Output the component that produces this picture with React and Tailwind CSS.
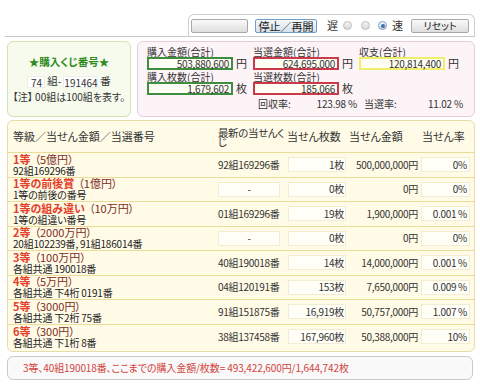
import React from "react";

const rows = [
  { rank: "1等", prize: "（5億円）", note: "92組169296番", latest: "92組169296番", count: "1枚", amount: "500,000,000円", rate: "0%" },
  { rank: "1等の前後賞", prize: "（1億円）", note: "1等の前後の番号", latest: "-", count: "0枚", amount: "0円", rate: "0%" },
  { rank: "1等の組み違い", prize: "（10万円）", note: "1等の組違い番号", latest: "01組169296番", count: "19枚", amount: "1,900,000円", rate: "0.001 %" },
  { rank: "2等", prize: "（2000万円）", note: "20組102239番, 91組186014番", latest: "-", count: "0枚", amount: "0円", rate: "0%" },
  { rank: "3等", prize: "（100万円）", note: "各組共通 190018番", latest: "40組190018番", count: "14枚", amount: "14,000,000円", rate: "0.001 %" },
  { rank: "4等", prize: "（5万円）", note: "各組共通 下4桁 0191番", latest: "04組120191番", count: "153枚", amount: "7,650,000円", rate: "0.009 %" },
  { rank: "5等", prize: "（3000円）", note: "各組共通 下2桁 75番", latest: "91組151875番", count: "16,919枚", amount: "50,757,000円", rate: "1.007 %" },
  { rank: "6等", prize: "（300円）", note: "各組共通 下1桁 8番", latest: "38組137458番", count: "167,960枚", amount: "50,388,000円", rate: "10%" },
];

const Field = ({ value, unit, tone }) => (
  <div className="flex items-center">
    <div className={`w-[86px] h-[13px] border-2 ${tone} bg-[#fffef4] text-right pr-[2px] text-[10px] leading-[9px] tracking-[-0.3px]`}>
      {value}
    </div>
    <span className="ml-[3px] text-[11px]">{unit}</span>
  </div>
);

const Radio = ({ on }) => (
  <span
    className={`w-[9px] h-[9px] rounded-full border flex items-center justify-center bg-linear-to-b from-[#f6f6f6] to-[#d8d8d8] ${
      on ? "border-[#7d9cc0]" : "border-[#bcbcbc]"
    }`}
  >
    {on && <span className="w-[4px] h-[4px] rounded-full bg-[#3570b8]" />}
  </span>
);

export default function App() {
  return (
    <div className="w-[480px] h-[385px] bg-white text-[#333] font-['Noto_Sans_CJK_JP',sans-serif] [font-feature-settings:'palt'] text-[11px] leading-none overflow-hidden">
      {/* controls */}
      <div className="h-[37px] pt-[14px] mx-[5px] border-b border-[#c8c8c8] flex justify-end">
        <div className="w-[287px] h-[22px] border border-b-0 border-[#cfcfcf] rounded-t-[6px] flex items-center">
          <button className="ml-[2px] w-[57px] h-[14px] border border-[#a8a8a8] rounded-[2px] bg-linear-to-b from-[#fafafa] to-[#dedede]" />
          <button className="ml-[7px] w-[62px] h-[14px] border border-[#6f9fc8] rounded-[2px] bg-linear-to-b from-[#f4f8fb] to-[#d6e2ec] text-[11px] leading-[12px] text-[#222]">
            停止／再開
          </button>
          <span className="ml-[10px] w-[11px]">遅</span>
          <span className="ml-[5px]"><Radio /></span>
          <span className="ml-[9px]"><Radio /></span>
          <span className="ml-[8px]"><Radio on /></span>
          <span className="ml-[5px] w-[11px]">速</span>
          <button className="ml-[8px] w-[58px] h-[14px] border border-[#a8a8a8] rounded-[2px] bg-linear-to-b from-[#fafafa] to-[#dedede] text-[10px] leading-[12px] text-[#222]">
            リセット
          </button>
        </div>
      </div>

      {/* summary panels */}
      <div className="flex items-start gap-[6px] pl-[7px] pr-[5px] mt-[4px]">
        <div className="w-[124px] h-[76px] border border-[#d4e2b4] rounded-[6px] bg-[#f6fbee] flex flex-col items-center justify-center">
          <div className="font-bold text-[10.5px] text-[#2e8b1e] leading-[12px]">★購入くじ番号★</div>
          <div className="flex items-center mt-[7px] h-[13px] text-[10.5px]">
            <span className="w-[18px] h-[12px] bg-white border border-[#eeeeee] text-right pr-[2px] text-[10px] leading-[11px]">74</span>
            <span className="ml-[2px]">組-</span>
            <span className="ml-[2px] w-[35px] h-[12px] bg-white border border-[#eeeeee] text-right pr-[2px] text-[10px] leading-[11px]">191464</span>
            <span className="ml-[2px]">番</span>
          </div>
          <div className="mt-[3px] leading-[11px] text-[10px] whitespace-nowrap">【注】 00組は100組を表す。</div>
        </div>

        <div className="flex-1 h-[76px] border border-[#e9cbd8] rounded-[6px] bg-[#fdf4f7] pl-[9px] pt-[4px] text-[10px]">
          <div className="grid grid-cols-[106px_106px_1fr] grid-rows-[11px_13px_12px_13px_15px] items-center">
            <div className="leading-[11px]">購入金額(合計)</div>
            <div className="leading-[11px]">当選金額(合計)</div>
            <div className="leading-[11px]">収支(合計)</div>
            <Field value="503,880,600" unit="円" tone="border-[#3f8d3f]" />
            <Field value="624,695,000" unit="円" tone="border-[#cc3a4a]" />
            <Field value="120,814,400" unit="円" tone="border-[#f0ef6a]" />
            <div className="leading-[11px]">購入枚数(合計)</div>
            <div className="leading-[11px]">当選枚数(合計)</div>
            <div />
            <Field value="1,679,602" unit="枚" tone="border-[#3f8d3f]" />
            <Field value="185,066" unit="枚" tone="border-[#cc3a4a]" />
            <div />
            <div />
            <div className="flex justify-between pl-[5px] pr-[2px] self-end leading-[12px]">
              <span>回収率:</span>
              <span className="tracking-[-0.2px]">123.98 %</span>
            </div>
            <div className="flex justify-between pl-[5px] pr-[11px] self-end leading-[12px]">
              <span>当選率:</span>
              <span className="tracking-[-0.2px]">11.02 %</span>
            </div>
          </div>
        </div>
      </div>

      {/* results table */}
      <div className="mt-[3px] ml-[7px] mr-[5px] border border-[#e6dcaa] rounded-[6px] bg-[#fffbe7] pb-[2px]">
        <div className="flex items-center h-[32px] border-b border-[#eadb96] pl-[5px]">
          <div className="w-[205px]">等級／当せん金額／当選番号</div>
          <div className="w-[69px] leading-[9px] text-[10.5px] tracking-[-0.4px]">最新の当せんくじ</div>
          <div className="w-[61px]">当せん枚数</div>
          <div className="w-[72px] pl-[1px]">当せん金額</div>
          <div className="w-[52px] pl-[2px]">当せん率</div>
        </div>
        {rows.map((r, i) => (
          <div
            key={r.rank}
            className={`flex items-center h-[24.5px] pl-[5px] ${i < rows.length - 1 ? "border-b border-[#eadb96]" : ""}`}
          >
            <div className="w-[205px] flex flex-col">
              <div className="leading-[11px] whitespace-nowrap">
                <span className="font-bold text-[#e4402a]">{r.rank}</span>
                <span className="ml-[4px] text-[#7b2d22]">{r.prize}</span>
              </div>
              <div className="text-[10px] leading-[11px] text-[#222] tracking-[-0.2px] whitespace-nowrap">{r.note}</div>
            </div>
            <div className="w-[69px] pr-[7px]">
              <div
                className={`h-[15px] flex items-center text-[10px] tracking-[-0.3px] ${
                  r.latest === "-" ? "justify-center bg-[#fffef7] border border-[#f2ecd2]" : ""
                }`}
              >
                {r.latest}
              </div>
            </div>
            <div className="w-[61px] pl-[1px] pr-[2px]">
              <div className="h-[15px] flex items-center justify-end pr-[1px] bg-[#fffef7] border border-[#f2ecd2] text-[10px] tracking-[-0.3px]">
                {r.count}
              </div>
            </div>
            <div className="w-[72px] text-right pr-[2px] text-[10px] tracking-[-0.3px]">{r.amount}</div>
            <div className="w-[50px] pl-[1px]">
              <div className="h-[15px] flex items-center justify-end pr-[2px] bg-[#fffef7] border border-[#f2ecd2] text-[10px] tracking-[-0.3px]">
                {r.rate}
              </div>
            </div>
          </div>
        ))}
      </div>

      {/* footer */}
      <div className="mt-[4px] ml-[7px] mr-[7px] h-[24px] border border-[#c9c9c9] rounded-[6px] bg-[#f9f9f9] flex items-center pl-[15px] text-[10px] text-[#d2433c] tracking-[-0.1px]">
        3等、40組190018番、ここまでの購入金額/枚数= 493,422,600円/1,644,742枚
      </div>
    </div>
  );
}
